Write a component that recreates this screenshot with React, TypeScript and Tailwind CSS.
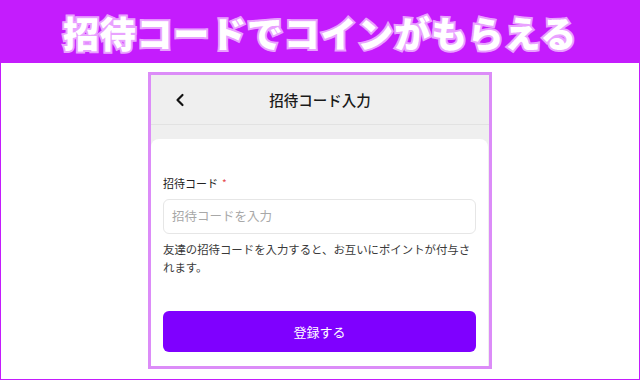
import { ChevronLeft } from "lucide-react"

const jp = "font-['Noto_Sans_CJK_JP','Noto_Sans',sans-serif]"

export default function App() {
  return (
    <div className={`w-[640px] h-[380px] flex flex-col border border-[#c41cfd] bg-white ${jp}`}>
      <div className="h-[62px] shrink-0 bg-[#c41cfd] flex items-center justify-center">
        <h1 className="text-[36px] font-black text-white leading-none tracking-[0.8px] [-webkit-text-stroke:4px_#e9a2ff] [paint-order:stroke_fill]">
          招待コードでコインがもらえる
        </h1>
      </div>

      <div className="flex-1 flex justify-center pt-[9px]">
        <div className="w-[344px] h-[297px] border-[3px] border-[#dc8cf8] bg-[#efefef] flex flex-col">
          <div className="h-[50px] shrink-0 grid grid-cols-[1fr_auto_1fr] items-center border-b border-[#e2e2e2]">
            <div className="pl-[19px]">
              <ChevronLeft size={20} strokeWidth={2.6} className="text-[#111]" />
            </div>
            <div className="text-[14.5px] font-medium text-[#1a1a1a]">招待コード入力</div>
            <div />
          </div>

          <div className="flex-1 mt-[14px] mr-px bg-white rounded-t-lg px-[12px] pt-[36px]">
            <div className="flex items-center gap-1 text-[11px] text-[#222] leading-4">
              招待コード
              <span className="text-[#e5484d] text-[10px]">*</span>
            </div>
            <div className="mt-2 h-[35px] rounded-md border border-[#e6e6e6] flex items-center px-2">
              <span className="text-[12.5px] text-[#a8a8a8]">招待コードを入力</span>
            </div>
            <p className="mt-[6px] text-[11.4px] leading-[18px] text-[#3a3a3a]">
              友達の招待コードを入力すると、お互いにポイントが付与されます。
            </p>
            <button className="mt-[35px] w-full h-[41px] rounded-md bg-[#7f00ff] text-white text-[13px]">
              登録する
            </button>
          </div>
        </div>
      </div>
    </div>
  )
}
